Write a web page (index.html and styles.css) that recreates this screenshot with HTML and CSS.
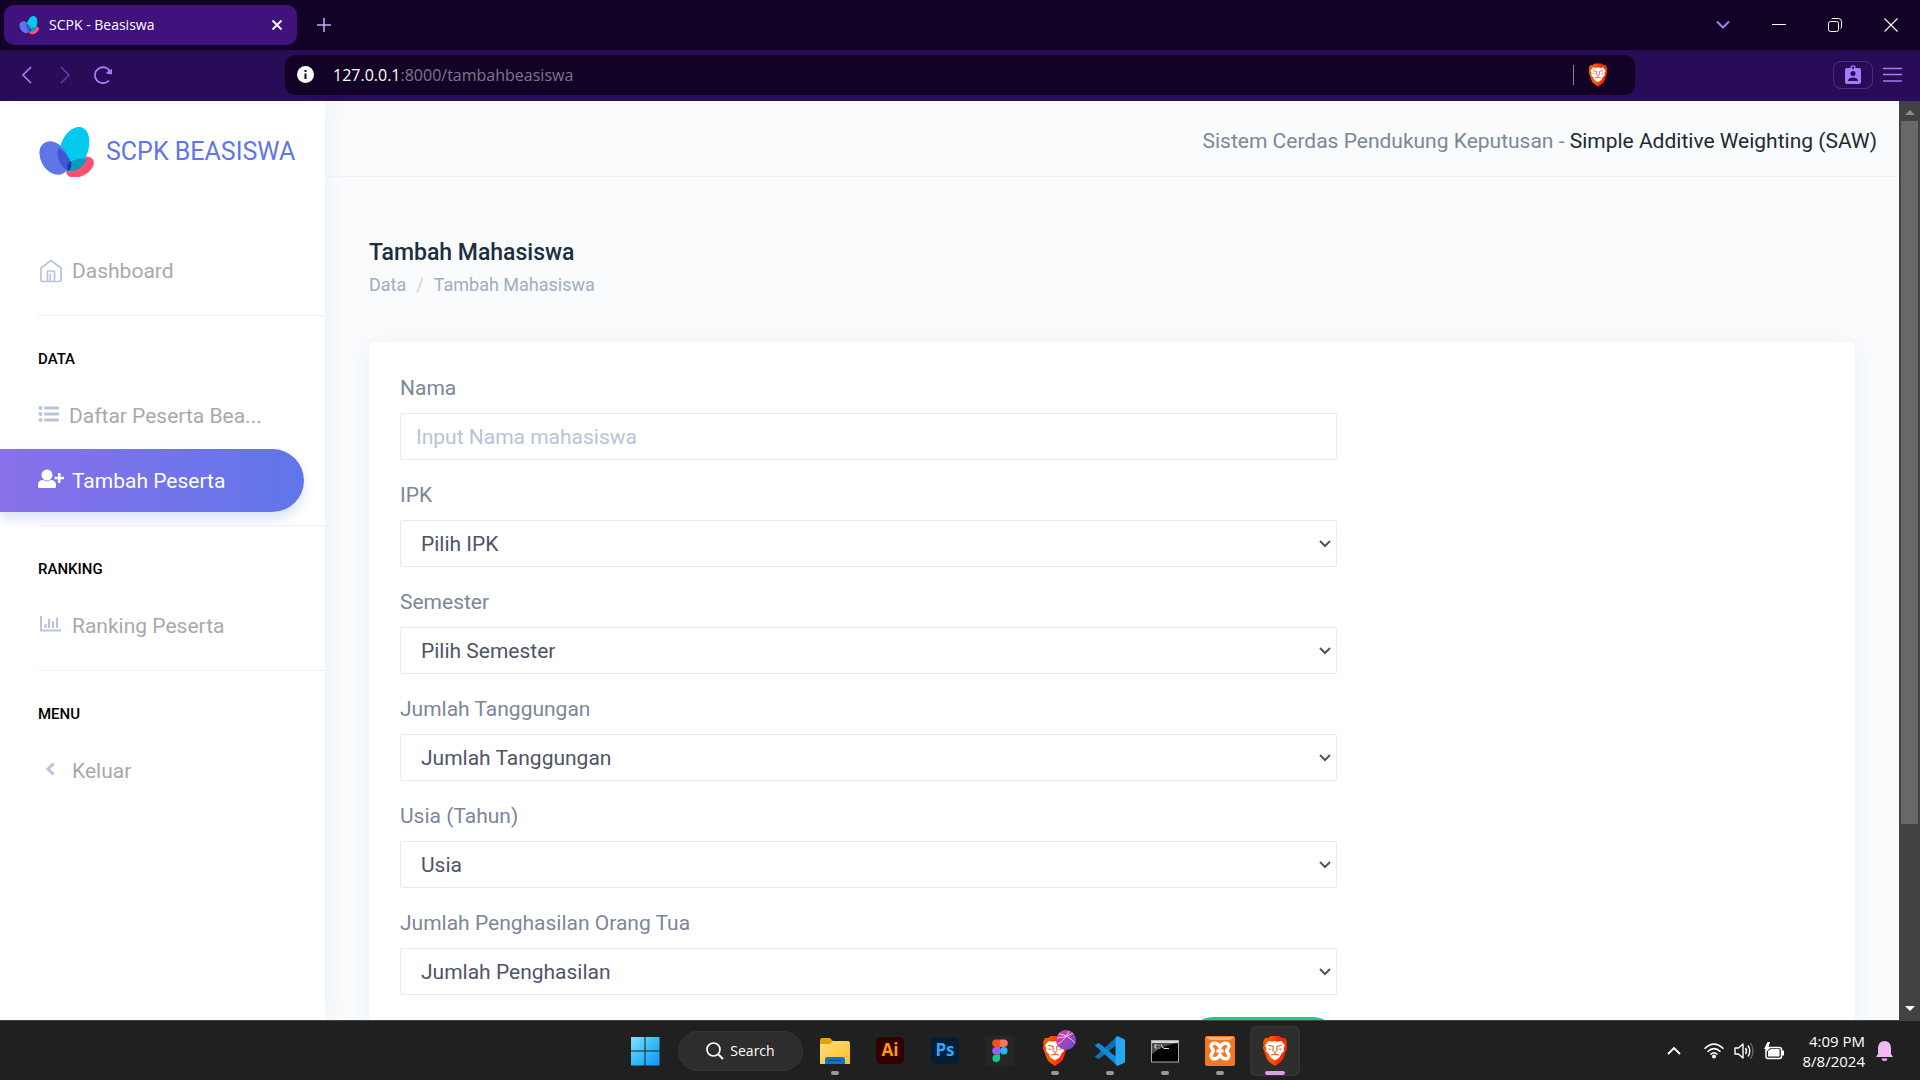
FILE: index.html
```html
<!DOCTYPE html>
<html lang="id">
<head>
<meta charset="utf-8">
<meta name="viewport" content="width=device-width, initial-scale=1">
<title>SCPK - Beasiswa</title>
<link rel="stylesheet" href="styles.css">
</head>
<body>
<svg class="sprite" aria-hidden="true">
  <defs>
    <linearGradient id="brave-fill" x1="0" x2="1" y1="0" y2="0"><stop offset=".35" stop-color="#ff5500"/><stop offset=".65" stop-color="#ff2a00"/></linearGradient>
    <linearGradient id="win-fill" x1="0" y1="0" x2="1" y2="1"><stop offset="0" stop-color="#8ae0ff"/><stop offset=".5" stop-color="#35bdf8"/><stop offset="1" stop-color="#0c95f5"/></linearGradient>
    <linearGradient id="folder-fill" x1="0" y1="0" x2="1" y2="1"><stop offset="0" stop-color="#ffe07a"/><stop offset="1" stop-color="#fdbf24"/></linearGradient>
    <linearGradient id="ball-fill" x1="0" y1="0" x2="1" y2="1"><stop offset="0" stop-color="#e0409a"/><stop offset=".5" stop-color="#a844b8"/><stop offset="1" stop-color="#4d4fe0"/></linearGradient>
  </defs>
  <symbol id="butterfly" viewBox="0 0 56 50">
    <ellipse cx="42" cy="40" rx="15" ry="9" transform="rotate(-28 42 40)" fill="#ff4f70"/>
    <ellipse cx="36" cy="22" rx="14" ry="23" transform="rotate(20 36 22)" fill="#01caf1"/>
    <path d="M28 42C31 33 40 30 49 32C46 39 40 44 33 44C31 44 29 43 28 42Z" fill="#059bbd"/>
    <ellipse cx="16" cy="31" rx="13" ry="18" transform="rotate(-32 16 31)" fill="#5f76e8"/>
    <path d="M20 21C27 23 33 32 33 39L31 43C24 43 18 32 20 21Z" fill="#3f57cf"/>
    <path d="M29 43C29 38 30 35 33 34C34 38 33 42 31 44Z" fill="#1c36ba"/>
  </symbol>
  <symbol id="lion" viewBox="0 0 26 30">
    <path d="M6 2L9 0H17L20 2H23L25 6L24.500 9L25 12L21 23Q20 25 18 26.500L13 30L8 26.500Q6 25 5 23L1 12L1.500 9L1 6L3 2Z" fill="url(#brave-fill)"/>
    <path d="M6.500 5L10 5.800L13 5L16 5.800L19.500 5L23 9.500L21.500 12L22 15L19.500 17.500L17.500 21.500L13 24.500L8.500 21.500L6.500 17.500L4 15L4.500 12L3 9.500Z" fill="#fff"/>
    <path d="M6.500 9.500L11.200 10.200L11 14.500L13 16.500L15 14.500L14.800 10.200L19.500 9.500M13 16.500V18.500M9 19L13 18.200L17 19M6.500 13L8.500 13.500M19.500 13L17.500 13.500" fill="none" stroke="#ff4300" stroke-width="1"/>
  </symbol>
</svg>

<div class="screen">
  <header class="browser">
    <div class="tabstrip">
      <div class="tab">
        <svg class="tab-logo"><use href="#butterfly"/></svg>
        <span class="tab-title">SCPK - Beasiswa</span>
        <button class="icon-btn tab-close" type="button" aria-label="Close tab"><svg width="12" height="12" viewBox="0 0 12 12"><path d="M1.500 1.500L10.500 10.500M10.500 1.500L1.500 10.500" stroke="#fff" stroke-width="1.800"/></svg></button>
      </div>
      <button class="icon-btn new-tab" type="button" aria-label="New tab"><svg width="14" height="14" viewBox="0 0 14 14"><path d="M7 0V14M0 7H14" stroke="#c7aef5" stroke-width="1.500"/></svg></button>
      <div class="window-buttons">
        <button class="icon-btn" type="button" aria-label="Search tabs"><svg width="14" height="10" viewBox="0 0 14 10"><path d="M1 1.500L7 7.500L13 1.500" fill="none" stroke="#a37cf7" stroke-width="2"/></svg></button>
        <button class="icon-btn" type="button" aria-label="Minimize"><svg width="14" height="14" viewBox="0 0 14 14"><path d="M0 6.500H14" stroke="#fff" stroke-width="1"/></svg></button>
        <button class="icon-btn" type="button" aria-label="Restore"><svg width="14" height="14" viewBox="0 0 14 14"><rect x=".5" y="3.500" width="10" height="10" rx="2" fill="none" stroke="#fff"/><path d="M3.500 1Q4 .5 5 .5H10.500Q13.500 .5 13.500 3.500V9Q13.500 10 12.500 10.500" fill="none" stroke="#fff"/></svg></button>
        <button class="icon-btn" type="button" aria-label="Close"><svg width="14" height="14" viewBox="0 0 14 14"><path d="M.5 .5L13.500 13.500M13.500 .5L.5 13.500" stroke="#fff" stroke-width="1.100"/></svg></button>
      </div>
    </div>
    <div class="toolbar">
      <nav class="history">
        <button class="icon-btn" type="button" aria-label="Back"><svg width="20" height="18" viewBox="0 0 20 18"><path d="M14 1L6 9L14 17" fill="none" stroke="#a37cf7" stroke-width="1.700"/></svg></button>
        <button class="icon-btn" type="button" aria-label="Forward"><svg width="20" height="18" viewBox="0 0 20 18"><path d="M6 1L14 9L6 17" fill="none" stroke="#613aa3" stroke-width="1.700"/></svg></button>
        <button class="icon-btn" type="button" aria-label="Reload"><svg width="20" height="20" viewBox="0 0 20 20"><path d="M16 15.500A8 8 0 1 1 17 6.500" fill="none" stroke="#a37cf7" stroke-width="1.800"/><path d="M13.500 8L18.500 9L18.500 4.500Z" fill="#a37cf7" stroke="#a37cf7"/></svg></button>
      </nav>
      <div class="address">
        <svg width="17" height="17" viewBox="0 0 17 17"><circle cx="8.500" cy="8.500" r="8.500" fill="#fff"/><path d="M8.500 7.500V13M8.500 4V6" stroke="#120326" stroke-width="2"/></svg>
        <span class="url"><span class="host">127.0.0.1</span>:8000/tambahbeasiswa</span>
        <span class="address-rule"></span>
        <svg class="shield"><use href="#lion"/></svg>
      </div>
      <div class="tools">
        <button class="icon-btn profile" type="button" aria-label="Profile"><svg width="16" height="20" viewBox="0 0 16 20"><path d="M2 3H5.500V1.500Q8-1 10.500 1.500V3H14Q16 3 16 5V17Q16 19 14 19H2Q0 19 0 17V5Q0 3 2 3Z" fill="#a37cf7"/><circle cx="8" cy="2.800" r="1.200" fill="#290c57"/><circle cx="8" cy="8.500" r="2.500" fill="#290c57"/><path d="M3 16Q3 12.500 8 12.500T13 16Z" fill="#290c57"/></svg></button>
        <button class="icon-btn" type="button" aria-label="Menu"><svg width="19" height="16" viewBox="0 0 19 16"><path d="M0 1.500H19M0 7.500H19M0 14H19" stroke="#a37cf7" stroke-width="1.500"/></svg></button>
      </div>
    </div>
  </header>

  <div class="viewport">
    <aside class="sidebar">
      <a class="brand" href="#"><svg class="brand-logo"><use href="#butterfly"/></svg>SCPK BEASISWA</a>
      <nav class="menu">
        <a class="menu-item" href="#"><svg class="menu-icon" viewBox="0 0 26 26"><path d="M3 10L13 2.500L23 10V21.500Q23 23.500 21 23.500H5Q3 23.500 3 21.500ZM9.500 23.500V13H16.500V23.500M12.300 23.500V16" fill="none" stroke="#b9c4da" stroke-width="1.700" stroke-linejoin="round"/></svg><span>Dashboard</span></a>
        <hr>
        <h2 class="menu-label">DATA</h2>
        <a class="menu-item tight" href="#"><svg class="menu-icon" viewBox="0 0 26 26"><g fill="#b9c4da"><circle cx="2.500" cy="5" r="2"/><circle cx="2.500" cy="11" r="2"/><circle cx="2.500" cy="17" r="2"/><rect x="6" y="3.500" width="15" height="3" rx="1"/><rect x="6" y="9.500" width="15" height="3" rx="1"/><rect x="6" y="15.500" width="15" height="3" rx="1"/></g></svg><span>Daftar Peserta Bea...</span></a>
        <a class="menu-item active" href="#"><svg class="menu-icon" viewBox="0 0 26 26"><g fill="#fff"><circle cx="9" cy="7" r="5.500"/><path d="M0 19V17Q0 12 5.500 12Q9 14.500 12.500 12Q18 12 18 17V19Q18 20 17 20H1Q0 20 0 19ZM20 5H22.500V8.700H26V11.200H22.500V15H20V11.200H16.500V8.700H20Z"/></g></svg><span>Tambah Peserta</span></a>
        <hr>
        <h2 class="menu-label">RANKING</h2>
        <a class="menu-item" href="#"><svg class="menu-icon" viewBox="0 0 26 26"><path d="M3 3V17.500H23" fill="none" stroke="#b9c4da" stroke-width="2"/><path d="M7.500 11V15M11 6V15M15 8.500V15M19 4.500V15" stroke="#b9c4da" stroke-width="2.200"/></svg><span>Ranking Peserta</span></a>
        <hr>
        <h2 class="menu-label">MENU</h2>
        <a class="menu-item" href="#"><svg class="menu-icon" viewBox="0 0 26 26"><path d="M15.500 5.500L10 11L15.500 16.500" fill="none" stroke="#b9c4da" stroke-width="3"/></svg><span>Keluar</span></a>
      </nav>
    </aside>

    <main class="page">
      <div class="topbar"><p>Sistem Cerdas Pendukung Keputusan - <span class="method">Simple Additive Weighting (SAW)</span></p></div>
      <div class="heading">
        <h1>Tambah Mahasiswa</h1>
        <nav class="crumbs"><a href="#">Data</a><span class="slash">/</span><span>Tambah Mahasiswa</span></nav>
      </div>
      <section class="card">
        <form class="form">
          <div class="field"><label for="nama">Nama</label><input id="nama" class="control" type="text" placeholder="Input Nama mahasiswa"></div>
          <div class="field"><label for="ipk">IPK</label><select id="ipk" class="control"><option>Pilih IPK</option></select></div>
          <div class="field"><label for="semester">Semester</label><select id="semester" class="control"><option>Pilih Semester</option></select></div>
          <div class="field"><label for="tanggungan">Jumlah Tanggungan</label><select id="tanggungan" class="control"><option>Jumlah Tanggungan</option></select></div>
          <div class="field"><label for="usia">Usia (Tahun)</label><select id="usia" class="control"><option>Usia</option></select></div>
          <div class="field"><label for="penghasilan">Jumlah Penghasilan Orang Tua</label><select id="penghasilan" class="control"><option>Jumlah Penghasilan</option></select></div>
          <button class="submit" type="submit" aria-label="Tambah"></button>
        </form>
      </section>
    </main>

    <div class="scrollbar">
      <svg width="12" height="20" viewBox="0 0 12 20"><path d="M1 14L6 9L11 14Z" fill="#8b8b8b"/></svg>
      <div class="track"><div class="thumb"></div></div>
      <svg width="12" height="20" viewBox="0 0 12 20"><path d="M1 6L6 11L11 6Z" fill="#fff"/></svg>
    </div>
  </div>

  <footer class="taskbar">
    <div class="apps">
      <button class="app" type="button" aria-label="Start"><svg width="30" height="30" viewBox="0 0 30 30"><path d="M1 1H14.500V14.500H1ZM15.500 1H29.500V14.500H15.500ZM1 15.500H14.500V29.500H1ZM15.500 15.500H29.500V29.500H15.500Z" fill="url(#win-fill)"/></svg></button>
      <button class="search" type="button"><svg width="18" height="18" viewBox="0 0 18 18"><circle cx="7.500" cy="7.500" r="6.500" fill="none" stroke="#fff" stroke-width="1.700"/><path d="M12 12L17 17" stroke="#fff" stroke-width="2"/></svg>Search</button>
      <button class="app running" type="button" aria-label="File Explorer"><svg width="30" height="30" viewBox="0 0 30 30"><path d="M0 4Q0 2 2 2H10L13 5H28V10H0Z" fill="#e3a20c"/><path d="M0 8H10L13 5H28Q30 5 30 7V28H0Z" fill="url(#folder-fill)"/><path d="M5 28V23Q5 21 7 21H23Q25 21 25 23V28Z" fill="#0f73c9"/><path d="M8 24.500H21" stroke="#074a8c" stroke-width="1"/></svg></button>
      <button class="app" type="button"><span class="adobe ai">Ai</span></button>
      <button class="app" type="button"><span class="adobe ps">Ps</span></button>
      <button class="app" type="button" aria-label="Figma"><svg width="30" height="30" viewBox="0 0 30 30"><rect width="30" height="30" rx="3" fill="#262626"/><path d="M11 3.500H15V11H11A3.750 3.750 0 0 1 11 3.500Z" fill="#f24e1e"/><path d="M15 3.500H19A3.750 3.750 0 0 1 19 11H15Z" fill="#ff7262"/><path d="M11 11H15V18.500H11A3.750 3.750 0 0 1 11 11Z" fill="#a259ff"/><circle cx="18.800" cy="14.750" r="3.750" fill="#1abcfe"/><path d="M11 18.500H15V22.250A3.750 3.750 0 1 1 11 18.500Z" fill="#0acf83"/></svg></button>
      <button class="app running" type="button" aria-label="Brave profile"><svg class="app-lion"><use href="#lion"/></svg><svg class="app-badge" viewBox="0 0 20 20"><circle cx="10" cy="10" r="10" fill="url(#ball-fill)"/><path d="M1 8Q10 8 17 3M3 4Q12 5 19 13M2 14Q9 10 13 1" fill="none" stroke="#efc3f3" stroke-width="1"/></svg></button>
      <button class="app running" type="button" aria-label="Visual Studio Code"><svg width="30" height="30" viewBox="0 0 30 30"><path d="M0 20.500L22 .5V8.500L4.500 22.500Q3.500 23.200 2.500 22.500L.5 21.300Q0 21 0 20.500Z" fill="#0f70b3"/><path d="M0 9.500L22 29.500V21.500L4.500 7.500Q3.500 6.800 2.500 7.500L.5 8.700Q0 9 0 9.500Z" fill="#128ad8"/><path d="M22 0L29 3Q30 3.500 30 5V25Q30 26.500 29 27L22 30L20.500 28V2Z" fill="#27a8f2"/></svg></button>
      <button class="app running" type="button" aria-label="Command Prompt"><svg width="28" height="30" viewBox="0 0 28 30"><rect x=".5" y="4.500" width="27" height="21.500" fill="#000" stroke="#a9adb3"/><path d="M1 5H27V7H1Z" fill="#d5d8dc"/><path d="M1 7H27Q12 9 1 18Z" fill="#505050"/><path d="M6 9H4V12H6M8 9V10M8 11.500V12.500M10 8.500L12.500 12.500M13 12.500H18" fill="none" stroke="#e0e0e0" stroke-width="1"/></svg></button>
      <button class="app running" type="button" aria-label="XAMPP"><svg width="30" height="30" viewBox="0 0 30 30"><rect width="30" height="30" rx="2" fill="#f37623"/><path d="M1 1H29L25 4H5Z" fill="#f9b27f"/><path d="M15 11.500C13 6 7 6 6 10C6 12.500 8.500 14 8.500 15C8.500 16 6 17.500 6 20C7 24 13 24 15 18.500C17 24 23 24 24 20C24 17.500 21.500 16 21.500 15C21.500 14 24 12.500 24 10C23 6 17 6 15 11.500Z" fill="none" stroke="#fff" stroke-width="3.400" stroke-linejoin="round"/><path d="M11.500 15H18.500" stroke="#fff" stroke-width="3.400"/></svg></button>
      <button class="app running current" type="button" aria-label="Brave"><svg class="app-lion"><use href="#lion"/></svg></button>
    </div>
    <div class="tray">
      <svg width="14" height="9" viewBox="0 0 14 9"><path d="M1 8L7 2L13 8" fill="none" stroke="#fff" stroke-width="1.800"/></svg>
      <div class="status">
        <svg width="20" height="16" viewBox="0 0 20 16"><g fill="none" stroke="#fff" stroke-width="1.500"><path d="M.5 5.800Q10-3.500 19.500 5.800M3.500 8.800Q10 2.500 16.500 8.800M6.500 11.500Q10 8 13.500 11.500"/></g><circle cx="10" cy="13.500" r="2" fill="#fff"/></svg>
        <svg width="20" height="18" viewBox="0 0 20 18"><path d="M1 6H4.500L9 2V16L4.500 12H1Z" fill="none" stroke="#fff" stroke-width="1.400" stroke-linejoin="round"/><path d="M11.500 6Q13.500 9 11.500 12M14 3.500Q17.500 9 14 14.500" fill="none" stroke="#fff" stroke-width="1.400"/><path d="M16.500 1Q21.500 9 16.500 17" fill="none" stroke="#666" stroke-width="1.400"/></svg>
        <svg width="21" height="18" viewBox="0 0 21 18"><rect x="2" y="5.500" width="15.500" height="11" rx="2" fill="none" stroke="#fff" stroke-width="1.500"/><path d="M4 9L7 7H15.500V14.500H4ZM18 8.500H20V13.500H18ZM3.500 0L0 7H3L1.500 11L7 5H4.500L6 0Z" fill="#fff"/></svg>
      </div>
      <div class="clock"><time>4:09 PM</time><time>8/8/2024</time></div>
      <svg width="17" height="20" viewBox="0 0 17 20"><path d="M2 13V7Q2.500 0 8.500 0T15 7V13L17 16H0Z" fill="#f0b9f2"/><path d="M5.500 17.500H11.500Q11 20 8.500 20T5.500 17.500Z" fill="#f0b9f2"/></svg>
    </div>
  </footer>
</div>
</body>
</html>
```
FILE: styles.css
```css
* { box-sizing: border-box; }
body { margin: 0; font: 21px/30px Roboto, "Liberation Sans", sans-serif; color: #7c8798; }
a { color: inherit; text-decoration: none; }
button { border: 0; padding: 0; background: none; color: inherit; }
h1, h2, p { margin: 0; }
svg { display: block; flex: none; }
.sprite { position: absolute; width: 0; height: 0; }
.screen { display: grid; grid-template-rows: auto minmax(0, 1fr) auto; height: 100vh; overflow: hidden; }
.icon-btn { display: grid; place-items: center; }

/* Browser frame */
.browser { font-family: "Open Sans", "Noto Sans", sans-serif; color: #fff; }
.tabstrip { display: flex; align-items: center; height: 50px; padding: 0 22px 0 4px; background: #120326; }
.tab { display: flex; align-items: center; width: 293px; height: 40px; padding: 0 14px 0 15px; border-radius: 10px; background: #3f127c; font-size: 14px; }
.tab-logo { width: 20px; height: 20px; margin-right: 10px; }
.tab-close { margin-left: auto; }
.new-tab { margin-left: 20px; }
.window-buttons { display: flex; gap: 42px; margin-left: auto; }
.toolbar { display: flex; align-items: center; height: 51px; padding: 0 18px 2px 17px; background: #290c57; }
.history { display: flex; align-items: center; gap: 18px; width: 268px; }
.address { display: flex; align-items: center; flex: 0 1 1350px; height: 40px; padding: 0 27px 0 12px; border-radius: 10px; background: #120326; font-size: 16px; }
.url { margin-left: 19px; color: #7e768c; }
.host { color: #fff; }
.address-rule { width: 1px; height: 20px; margin: 0 14px 0 auto; background: #8d8598; }
.shield { width: 20px; height: 24px; }
.tools { display: flex; align-items: center; gap: 10px; margin-left: auto; }
.profile { width: 40px; height: 28px; border: 1px solid #4b2c80; border-radius: 8px; }

/* Application */
.viewport { display: grid; grid-template-columns: 325px minmax(0, 1fr) 21px; min-height: 0; background: #f9fbfd; }
.sidebar { background: #fff; box-shadow: 1px 0 20px rgba(60, 90, 170, .08); }
.brand { display: flex; align-items: center; gap: 12px; height: 102px; padding-left: 38px; font-size: 25px; color: #5f76e8; }
.brand-logo { width: 56px; height: 50px; }
.menu { padding-top: 36px; }
.menu hr { height: 1px; margin: 13px 0 0 38px; border: 0; background: #f0f0f0; }
.menu-label { padding: 30px 0 12px 38px; font-size: 15px; line-height: 26px; font-weight: 500; color: #000; }
.menu-item { display: flex; align-items: center; gap: 8px; height: 63px; margin-right: 21px; padding: 0 20px 0 38px; color: #a9a9a9; white-space: nowrap; }
.menu-item + .menu-item { margin-top: 2px; }
.menu-icon { width: 26px; height: 26px; }
.tight { gap: 5px; }
.menu-item.active { border-radius: 0 32px 32px 0; background: linear-gradient(to right, #8971ea, #7f72ea, #7574ea, #6a75e9, #5f76e8); box-shadow: 0 7px 12px rgba(95, 118, 232, .21); color: #fff; }
.page { min-width: 0; min-height: 0; overflow: hidden; }
.topbar { display: flex; align-items: center; justify-content: flex-end; height: 76px; padding: 5px 22px 0; border-bottom: 1px solid #edf2f9; }
.method { color: #212932; }
.heading { padding: 60px 44px 41px; }
h1 { font-size: 23px; font-weight: 500; line-height: 32px; color: #1c2d41; }
.crumbs { display: flex; gap: 10px; font-size: 18px; line-height: 32px; color: #a1acc2; }
.slash { color: #ccd2dc; }
.card { margin: 0 44px; padding: 31px 36px 31px 31px; border-radius: 5px; background: #fff; box-shadow: 0 5px 20px rgba(60, 110, 180, .08); }
.form { display: flex; flex-direction: column; gap: 20px; width: 66%; }
.field { display: flex; flex-direction: column; gap: 10px; }
.control { width: 100%; height: 47px; padding: 0 15px; border: 1px solid #e9ecef; border-radius: 2px; background: #fff; color: #4f5467; font: inherit; }
.control::placeholder { color: #b8c3d9; }
select.control { padding: 0 20px; appearance: none; background: #fff url("data:image/svg+xml,%3Csvg xmlns='http://www.w3.org/2000/svg' width='12' height='8'%3E%3Cpath d='M1 1L6 6L11 1' fill='none' stroke='%234f5467' stroke-width='2'/%3E%3C/svg%3E") no-repeat right 5px center; }
.submit { align-self: flex-end; width: 148px; height: 48px; margin-top: 2px; border-radius: 24px; background: #22ca80; }
.scrollbar { display: flex; flex-direction: column; align-items: center; background: #424242; }
.track { flex: 1; width: 17px; }
.thumb { height: 80%; background: #686868; }

/* Taskbar */
.taskbar { display: grid; grid-template-columns: 1fr auto 1fr; align-items: center; height: 60px; border-top: 1px solid #464646; background: #202020; color: #fff; font: 15px/20px "Open Sans", "Noto Sans", sans-serif; }
.apps { grid-column: 2; display: flex; align-items: center; gap: 5px; }
.app { position: relative; display: grid; place-items: center; width: 50px; height: 50px; border-radius: 6px; }
.search { display: flex; align-items: center; justify-content: center; gap: 6px; width: 125px; height: 40px; margin: 0 2px 0 3px; border-radius: 20px; border: 1px solid #353535; background: #2d2d2d; font: 14px/20px "Open Sans", "Noto Sans", sans-serif; }
.running::after { content: ""; position: absolute; bottom: 1px; left: 21px; width: 8px; height: 4px; border-radius: 2px; background: #999; }
.current { background: #2e2e2e; box-shadow: inset 0 0 0 1px #363636; }
.current::after { left: 15px; width: 20px; background: #d99fe2; }
.app-lion { width: 26px; height: 30px; }
.app-badge { position: absolute; top: 4px; right: 4px; width: 20px; height: 20px; }
.adobe { width: 28px; height: 27px; border-radius: 5px; font: bold 17px/26px "Open Sans", sans-serif; }
.ai { background: #330000; color: #ff9a00; }
.ps { background: #001e36; color: #31a8ff; }
.tray { justify-self: end; display: flex; align-items: center; padding-right: 27px; }
.status { display: flex; align-items: center; gap: 10px; margin: 0 18px 0 23px; }
.clock { display: flex; flex-direction: column; margin-right: 11px; text-align: right; font-size: 15px; }
```
